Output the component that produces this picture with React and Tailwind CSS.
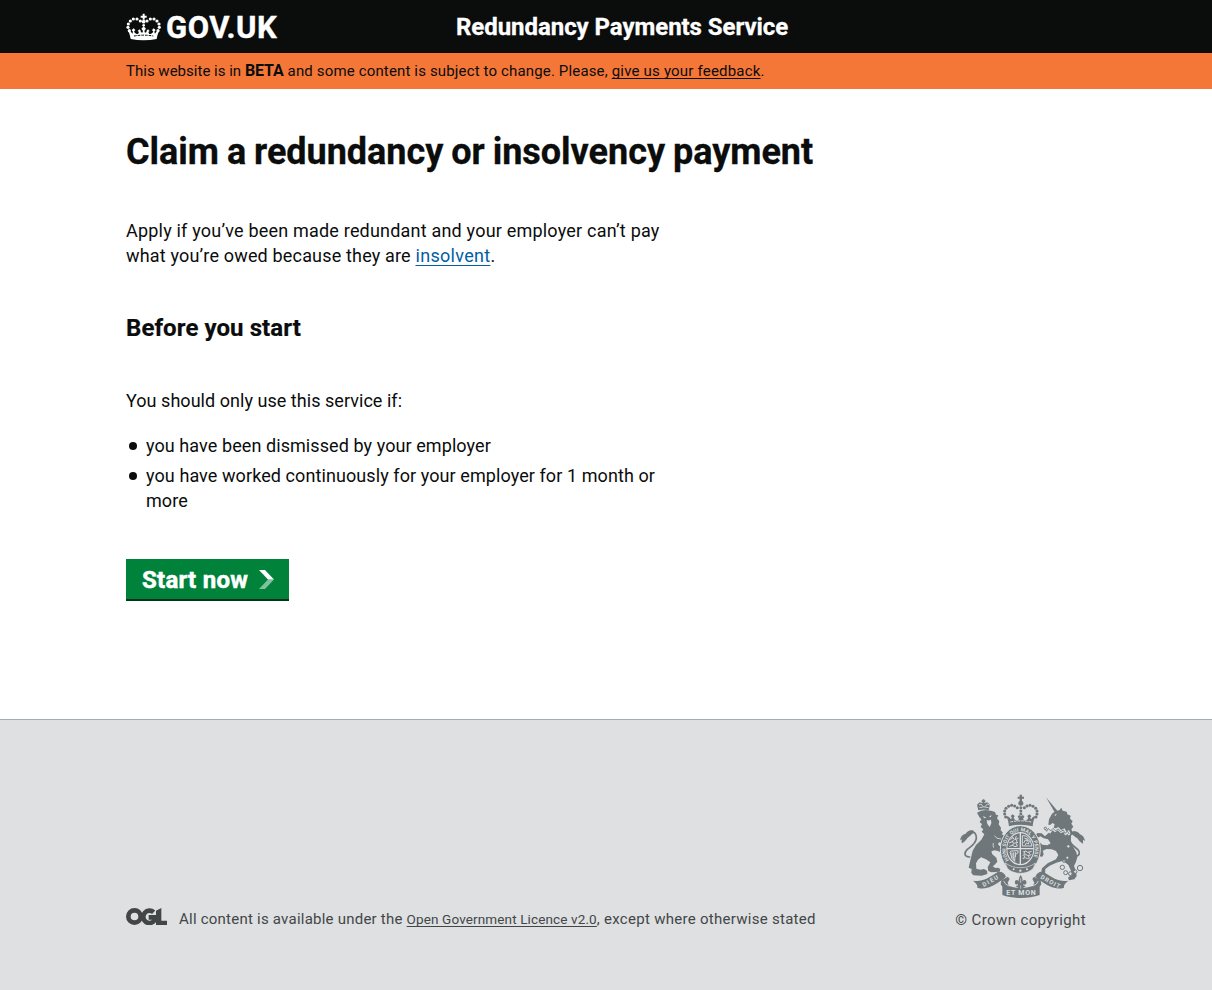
import React from "react";

function dotsAlong(points, r) {
  return points.map(([x, y], i) => <circle key={i} cx={x} cy={y} r={r} />);
}

function Crown() {
  const left = [[73, 60], [63, 54], [52, 54], [43, 60], [37, 69], [36, 79], [40, 89]];
  return (
    <svg viewBox="30 36 105 84" className="h-7 w-[35px] shrink-0 fill-white" aria-hidden="true">
      <path d="M80 38h6v6h6v6h-6v6h-6v-6h-6v-6h6z" />
      <circle cx="83" cy="62" r="5.5" />
      <circle cx="83" cy="73" r="4" />
      {dotsAlong(left, 4.8)}
      {dotsAlong(left.map(([x, y]) => [166 - x, y]), 4.8)}
      <path d="M36 88c3 7 6 14 8 26 25 5 53 5 78 0 2-12 5-19 8-26-5 0-9 5-13 10l-2-6 4-5-6-5-5 5 4 5c-3 5-7 7-12 7l-3-6 4-3-5-5-5 5 1 3-5 2-2-5 5-7-7-7-7 7 5 7-2 5-5-2 1-3-5-5-5 5 4 3-3 6c-5 0-9-2-12-7l4-5-5-5-6 5 4 5-2 6c-4-5-8-10-13-10z" />
      <path d="M54 105q29-5 58 0" fill="none" stroke="#0b0c0c" strokeWidth="3" strokeDasharray="8 3" />
    </svg>
  );
}

function Chevron() {
  return (
    <svg viewBox="0 0 15 19" className="h-[19px] w-[15px] shrink-0" aria-hidden="true">
      <path d="M0 0h6l9 9.5h-6z" fill="#fff" />
      <path d="M0 19h6l9-9.5h-6z" fill="#fff" fillOpacity=".5" />
    </svg>
  );
}

function OglLogo() {
  return (
    <svg viewBox="30 39 123 51" className="h-[17px] w-[41px] shrink-0" aria-label="Open Government Licence">
      <g fill="none" stroke="#434647" strokeWidth="14">
        <circle cx="55.5" cy="64.5" r="18.5" />
        <path d="M113 52A18.5 18.5 0 1 0 115 77V67H98" />
      </g>
      <path d="M120 47l16-8v38h17v13h-33z" fill="#434647" />
    </svg>
  );
}

function RoyalArms() {
  const arch = [[205, 68], [197, 63], [188, 61], [179, 64], [171, 70], [167, 78], [167, 87], [170, 96]];
  const g = "#6f777b";
  const l = "#dee0e2";
  return (
    <svg viewBox="30 27 381 312" className="h-[104px] w-[127px]" aria-label="Royal coat of arms">
      <defs>
        <path id="garter" d="M180 225.600A44 53 0 1 1 248 225.600" />
      </defs>
      <g fill={g}>
        {/* central crown */}
        <path d="M212 29h7v6h6v6h-6v7h-7v-7h-6v-6h6z" />
        <circle cx="215.500" cy="55" r="7.500" />
        {dotsAlong([[215.5, 68], [215.5, 78], [215.5, 87]], 4.5)}
        {dotsAlong(arch, 4.600)}
        {dotsAlong(arch.map(([x, y]) => [431 - x, y]), 4.600)}
        <path d="M169 93c7 6 9 14 11 31q35-10 71 0c2-17 4-25 11-31-7 0-12 3-15 9l-4-3 4-6-6-5-6 5 3 6c-3 6-7 8-12 8l-4-6 4-6-4-5-6 4-6-4-4 5 4 6-4 6c-5 0-9-2-12-8l3-6-6-5-6 5 4 6-4 3c-3-6-8-9-15-9z" />
        <path d="M184 111q31-7 63 0" fill="none" stroke={l} strokeWidth="3" strokeDasharray="8 3" />

        {/* lion with its crown */}
        <path d="M88 76L84 59l8-7 8 2 1-3h-3v-5h3v-3h5v3h3v5h-3l1 3 8-2 8 7-4 17q-15-5-31 0z" />
        <path d="M91 68q13-5 28 0M90 60l6-3 6 8M121 60l-6-3-7 8" fill="none" stroke={l} strokeWidth="2.500" />
        <path d="M84 83l12-6 14-2 16 2 12 4 3 8 7 2-4 9 7 9-2 9 7 10-1 8 7 7-4 5 10 5 9 10 2 12-8 3-12-4-9-2-3 5 4 6 14 2 12-3 5 9-8 11-14 4-11-7-12-3-10 3 3 9 12 10 3 12-8 9-6 5 8 5 9-1 6 5-2 7-25 2-9-4-2-11 8-15-13-9-15-6-9 7-6 11 1 16 12 3 11-2 9 5 1 10-17 5-25-1-6-7 1-12-9-4 4-18 4-16 4-17 10-17 16-16 9-16-8-8 5-7-8-7 4-9-7-5 5-9-6-7z" />
        <path d="M101 94l11 3-6 3zM120 94l8-3-3 6zM113 105q6 3 13-1l1 11-5 11-7-9z" fill={l} />
        <path d="M136 152q6 10 20 10M134 188q-3-8-1-14" fill="none" stroke={l} strokeWidth="2.500" />
        <path d="M62 216C44 214 45 204 54 194C64 185 80 178 82 160C83 147 76 139 65 140" fill="none" stroke={g} strokeWidth="5" strokeLinecap="round" />
        <path d="M74 137c-10-3-19 1-24 9-9 2-15 8-17 20l5-3v12c9-4 14-11 18-17 8-3 10-11 18-13z" />

        {/* unicorn */}
        <path d="M291 37l34 40-7 6z" />
        <path d="M300 103l9-17 11-8 11-2 6-8 4 9 12 3 2 8 10 4-2 9 8 7-4 8 6 9-6 8 4 10-7 9-11-8-15-11-24-5 3-10-6-4-8 6-5-1z" />
        <path d="M316 90l7-4-3 7z" fill={l} />
        <path d="M309 134l19-5 25 8 13 17-1 17 9 17 8 14 3 15-4 13-6 13 6 16 2 14-7 10-16 3-3-8 10-9-2-14-7-15-16-13-20 6-20 9-13 10-1 15 5 12-8 9-12-5 2-13 4-20 17-15 25-12 7-13-7-12-13-5-15-1-12 5 3 11-4 7-9-1-3-14 6-11-8-9-13 1-5-6 5-7 15 1 12 10 15 2 10-6-8-12-13-3-10-6-9 5-5-8 5-7 13 1 10 9z" />
        <path d="M285 134l5 7 6-9 7 8 7-10 8 7 9-6 9 9 9-5 5 11 8-5 4 9" fill="none" stroke={l} strokeWidth="8" />
        <path d="M288 132l5 7 5-9 7 8 7-8 8 7 8-5 7 8 8-5 5 10 8-6 4 8" fill="none" stroke={g} strokeWidth="2.500" />
        <path d="M377 216C393 212 395 202 386 193C377 186 364 179 362 164C361 150 368 142 378 142" fill="none" stroke={g} strokeWidth="5" strokeLinecap="round" />
        <path d="M369 140c10-3 19 1 24 8 8 3 13 9 15 20l-6-4v12c-8-4-13-10-17-16-8-3-10-9-17-12z" />
        <g fill={l} stroke={g} strokeWidth="3">
          <circle cx="393" cy="249" r="8" /><circle cx="379" cy="260" r="5" />
          <circle cx="364" cy="266" r="5.500" /><circle cx="350" cy="263" r="6" /><circle cx="340" cy="247" r="6.500" />
          <circle cx="358" cy="184" r="5" /><circle cx="355" cy="218" r="4.500" /><circle cx="345" cy="228" r="4" />
          <circle cx="289" cy="130" r="3.500" />
        </g>

        {/* garter and quartered shield */}
        <ellipse cx="214" cy="193" rx="60" ry="71" stroke={l} strokeWidth="3" />
        <ellipse cx="214" cy="191" rx="42" ry="50" fill={l} />
        <ellipse cx="214" cy="191" rx="39" ry="46" />
        <text fill={l} className="font-['Roboto',sans-serif] text-[15px] font-bold"><textPath href="#garter" textLength="212">HONI SOIT QUI MAL Y PENSE</textPath></text>
        <path d="M214 144v94M174 191h80" stroke={l} strokeWidth="4" />
        <g fill="none" stroke={l} strokeWidth="2.800">
          <path d="M184 163l7-4 6 5 11-4M180 174l9-4 6 5 12-3M181 184l10-3 7 4 9-3M190 155l4 6M202 153l-3 9M193 165l-3 7M202 164l2 7M193 176l-2 6M202 175l2 7" />
          <path d="M220 152l12 1 10 10 7 20h-29zM224 174l5-9 7 4-3-9 8 8-3 9-6-3-4 7M226 159l7 3" />
          <path d="M183 201l3-3 21-1v7c-7 1-9 7-10 25l-8-9zM189 202v18M194 202v23M199 201v15" />
          <path d="M222 201l8-3 6 4 12-3M221 211l9-3 6 4 11-3M221 221l8-3 6 3 8-3M228 200l-3 7M239 201l3 7M228 211l-3 7M238 211l2 6" />
        </g>
        <path d="M169 234c14 10 27 14 45 14s32-4 45-14l-6 16c-10 10-24 15-39 15s-30-5-39-15z" stroke={l} strokeWidth="2" />
        <g fill={l}><circle cx="194" cy="253" r="3" /><circle cx="214" cy="257" r="3.500" /><circle cx="234" cy="253" r="3" /></g>

        {/* motto scroll and fleur-de-lis */}
        <path d="M72 287c27 5 47-8 74-26 12-2 20 3 25 14-6 6-10 9-18 14-21 15-44 27-68 19 2-7-4-14-13-21z" />
        <path d="M358 287c-27 5-47-8-74-26-12-2-20 3-25 14 6 6 10 9 18 14 21 15 44 27 68 19-2-7 4-14 13-21z" />
        <path d="M157 286l20-11 5 7-6 11 4 10c24 8 48 8 72 0l4-10-6-11 5-7 20 11 2 12-5 7v25c-34 12-78 12-112 0v-25l-5-7z" />
        <path d="M164 288q4 11 16 15M268 288q-4 11-16 15" fill="none" stroke={l} strokeWidth="2.500" />
        <g fill={l} className="font-['Roboto',sans-serif] text-[18px] font-bold">
          <text x="104" y="306" transform="rotate(-29 104 306)" textLength="52">DIEU</text>
          <text x="273" y="280" transform="rotate(29 273 280)" textLength="64">DROIT</text>
          <text x="172" y="330" className="text-[21px]" textLength="88">ET MON</text>
        </g>
        <path d="M215 270q10 13 3 23c5-12 16-9 14 1-1 6-7 6-9 2v5l7 3-10 6 1 5h-12l1-5-10-6 7-3v-5c-2 4-8 4-9-2-2-10 9-13 14-1q-7-10 3-23z" />
        <path d="M215 279v15M215 301v10" stroke={l} strokeWidth="2" />
      </g>
    </svg>
  );
}

const criteria = [
  { text: "you have been dismissed by your employer", spacing: "tracking-[0.08px]" },
  { text: "you have worked continuously for your employer for 1 month or more", spacing: "tracking-[0.085px]" },
];

export default function App() {
  return (
    <div className="flex min-h-[990px] flex-col bg-white font-['Roboto','Liberation_Sans',sans-serif] text-[#0b0c0c]">
      <header className="h-[53px] bg-[#0b0c0c] text-white">
        <div className="mx-auto flex h-full w-[960px]">
          <div className="flex w-[330px] items-center">
            <Crown />
            <span className="ml-[5px] mt-0.5 text-[31px] leading-[30px] font-bold tracking-[0.5px] [-webkit-text-stroke:0.4px_white]">GOV.UK</span>
          </div>
          <span className="mt-3 text-2xl leading-[30px] font-bold tracking-[-0.05px] [-webkit-text-stroke:0.3px_white]">Redundancy Payments Service</span>
        </div>
      </header>

      <div className="h-9 bg-[#f47738]">
        <p className="mx-auto w-[960px] pt-[8px] text-[15px] leading-5 tracking-[0.15px] whitespace-pre">
          <span className="tracking-[0.01px]">This website is in </span>
          <strong className="text-base leading-5 font-bold tracking-[-0.1px]">BETA</strong>
          {" and some content is subject to change. Please, "}
          <a href="#feedback" className="tracking-[0.2px] underline decoration-1 underline-offset-2 [text-decoration-skip-ink:none]">give us your feedback</a>.
        </p>
      </div>

      <main className="mx-auto w-[960px] flex-1 pt-[38px]">
        <h1 className="text-[36px] leading-[50px] font-bold tracking-[-0.02px] [word-spacing:-1px] [-webkit-text-stroke:0.3px_#0b0c0c]">Claim a redundancy or insolvency payment</h1>
        <div className="w-[540px] text-lg leading-[25px]">
          <p className="mt-[41px] tracking-[0.2px]">
            Apply if you’ve been made redundant and your employer can’t pay{" "}
            <span className="tracking-[0.17px]">what you’re owed because they are </span>
            <a href="#insolvent" className="tracking-[0.3px] text-[#005ea5] underline decoration-1 underline-offset-[3px] [text-decoration-skip-ink:none]">insolvent</a>.
          </p>
          <h2 className="mt-[45px] text-2xl leading-[30px] font-bold tracking-[0.08px] [-webkit-text-stroke:0.2px_#0b0c0c]">Before you start</h2>
          <p className="mt-[45px] tracking-[0.04px]">You should only use this service if:</p>
          <ul className="mt-5 flex flex-col gap-[5px]">
            {criteria.map((c) => (
              <li key={c.text} className="flex">
                <span className="mt-[9px] mr-[9px] ml-[3px] size-2 shrink-0 rounded-full bg-[#0b0c0c]" />
                <span className={c.spacing}>{c.text}</span>
              </li>
            ))}
          </ul>
        </div>
        <button className="mt-[46px] flex h-[42px] w-[163px] items-center border-b-2 border-[#003618] bg-[#00823b] pl-4 text-white">
          <span className="w-[117px] pt-px text-left text-2xl leading-[30px] font-bold tracking-[0.25px] [-webkit-text-stroke:0.5px_white]">Start now</span>
          <Chevron />
        </button>
      </main>

      <footer className="h-[271px] border-t border-[#a1acb2] bg-[#dee0e2] text-[15px] leading-5 text-[#434647]">
        <div className="mx-auto flex h-[210px] w-[960px] items-end justify-between">
          <div className="mb-px flex items-start">
            <span className="mt-[-1px]"><OglLogo /></span>
            <p className="ml-3 tracking-[0.23px] whitespace-pre">
              {"All content is available under the "}
              <a href="#licence" className="text-[13.5px] tracking-[0.13px] underline decoration-1 underline-offset-2 [text-decoration-skip-ink:none]">Open Government Licence v2.0</a>
              <span className="tracking-[0.28px]">, except where otherwise stated</span>
            </p>
          </div>
          <div className="flex flex-col items-end">
            <RoyalArms />
            <p className="mt-[12px] tracking-[0.38px]">© Crown copyright</p>
          </div>
        </div>
      </footer>
    </div>
  );
}
